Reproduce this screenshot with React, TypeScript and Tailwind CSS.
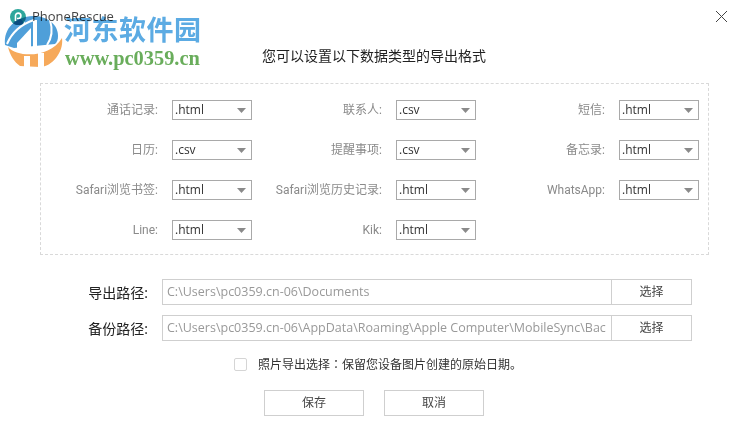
import React from 'react';

const font = "[font-family:'Open_Sans','Noto_Sans_CJK_SC',sans-serif]";

const formats = [
  { label: '通话记录:', value: '.html' },
  { label: '联系人:', value: '.csv' },
  { label: '短信:', value: '.html' },
  { label: '日历:', value: '.csv' },
  { label: '提醒事项:', value: '.csv' },
  { label: '备忘录:', value: '.html' },
  { label: 'Safari浏览书签:', value: '.html' },
  { label: 'Safari浏览历史记录:', value: '.html' },
  { label: 'WhatsApp:', value: '.html' },
  { label: 'Line:', value: '.html' },
  { label: 'Kik:', value: '.html' },
];

const FormatCell = ({ label, value }: { label: string; value: string }) => (
  <div className="flex items-center justify-end gap-[14px]">
    <span className="text-[12px] text-[#8a8a8a] whitespace-nowrap [font-family:'Roboto','Noto_Sans_CJK_SC',sans-serif]">{label}</span>
    <div className="w-[80px] h-[20px] border border-[#a9a9a9] flex items-center justify-between pl-[2px] pr-[5px] text-[12px] text-[#333]">
      <span>{value}</span>
      <svg width="9" height="5" viewBox="0 0 9 5">
        <path d="M0 0h9L4.5 5z" fill="#8a8a8a" />
      </svg>
    </div>
  </div>
);

const PathRow = ({ label, path }: { label: string; path: string }) => (
  <div className="flex items-center">
    <span className="w-[78px] text-right text-[14px] text-[#222] whitespace-nowrap">{label}</span>
    <div className="h-[26px] ml-[14px] w-[530px] flex border border-[#cfcfcf]">
      <div className="flex-1 min-w-0 pl-[4px] flex items-center text-[12.5px] text-[#999]">
        <span className="whitespace-nowrap">{path}</span>
      </div>
      <div className="w-[80px] border-l border-[#cfcfcf] flex items-center justify-center text-[12px] text-[#444]">选择</div>
    </div>
  </div>
);

const Watermark = () => (
  <div className="absolute left-0 top-0 mix-blend-multiply pointer-events-none">
    <svg className="absolute left-0 top-0" width="66" height="70" viewBox="0 0 66 70">
      <path d="M5 45C3 28 16 17 33 16C47 16 58 24 58 36C58 40 57 42 55 44L14 48Z" fill="#4f9fd9" />
      <path d="M7 44C12 32 22 24 34 20" stroke="#fff" strokeWidth="2" fill="none" />
      <path d="M24 21l1.500 3-3 0z" fill="#fff" />
      <path d="M17 43L31 28V49H17Z" fill="#fff" />
      <path d="M33 20h4v32h-4z" fill="#fff" />
      <path d="M50 20C53 30 52 38 47 45" stroke="#fff" strokeWidth="2" fill="none" />
      <path d="M8 47C18 58 50 58 62 38C64 52 52 67 40 67L20 66C14 62 10 55 8 47Z" fill="#f6a95a" />
      <path d="M24 56h6v12h-6zM38 53h6v16h-6z" fill="#fff" />
    </svg>
    <div className="absolute left-[64px] top-[14px] flex flex-col">
      <span className="text-[27px] leading-[32px] font-bold tracking-[0.5px] text-[#5cabe3] whitespace-nowrap">河东软件园</span>
      <span className="ml-[1px] mt-[1px] text-[20.4px] leading-[22px] font-bold text-[#69ad5b] whitespace-nowrap [font-family:'Liberation_Serif',serif]">www.pc0359.cn</span>
    </div>
  </div>
);

export default function App() {
  return (
    <div className={`${font} relative w-[748px] h-[440px] bg-white overflow-hidden`}>
      <div className="h-[33px] flex items-center justify-between pl-[10px] pr-[20px]">
        <div className="flex items-center gap-[6px]">
          <svg width="16" height="16" viewBox="0 0 16 16">
            <circle cx="8" cy="8" r="8" fill="#2ea69c" />
            <path d="M3 14a8 8 0 0 0 11 0l-3-4H6z" fill="#1f7a94" />
            <path d="M5.500 12V6.800a2.700 2.700 0 1 1 2.700 2.700H7" stroke="#fff" strokeWidth="1.600" fill="none" />
          </svg>
          <span className="text-[13px] text-[#444]">PhoneRescue</span>
        </div>
        <svg width="13" height="13" viewBox="0 0 13 13">
          <path d="M1 1l11 11M12 1L1 12" stroke="#444" strokeWidth="1" fill="none" />
        </svg>
      </div>

      <h1 className="mt-[13px] h-[20px] text-center text-[14px] leading-[20px] text-[#222]">您可以设置以下数据类型的导出格式</h1>

      <div className="ml-[40px] mt-[17px] w-[669px] h-[172px] border border-dashed border-[#d9d9d9] pt-[16px] pr-[9px] grid grid-cols-[211px_224px_223px] grid-rows-[repeat(4,20px)] gap-y-[20px]">
        {formats.map(f => (
          <FormatCell key={f.label} label={f.label} value={f.value} />
        ))}
      </div>

      <div className="mt-[24px] ml-[70px] flex flex-col gap-[10px]">
        <PathRow label="导出路径:" path="C:\Users\pc0359.cn-06\Documents" />
        <PathRow label="备份路径:" path="C:\Users\pc0359.cn-06\AppData\Roaming\Apple Computer\MobileSync\Bac" />
      </div>

      <div className="mt-[14px] ml-[234px] flex items-center gap-[11px]">
        <div className="w-[13px] h-[13px] rounded-[2px] border border-[#d5d5d5]" />
        <span className="text-[12px] leading-[17px] text-[#333]">照片导出选择<span className="[font-family:'Noto_Sans_CJK_TC',sans-serif]">：</span>保留您设备图片创建的原始日期。</span>
      </div>

      <div className="mt-[17px] ml-[264px] flex gap-[20px]">
        <div className="w-[100px] h-[26px] border border-[#cfcfcf] flex items-center justify-center text-[12px] text-[#444]">保存</div>
        <div className="w-[100px] h-[26px] border border-[#cfcfcf] flex items-center justify-center text-[12px] text-[#444]">取消</div>
      </div>

      <Watermark />
    </div>
  );
}
